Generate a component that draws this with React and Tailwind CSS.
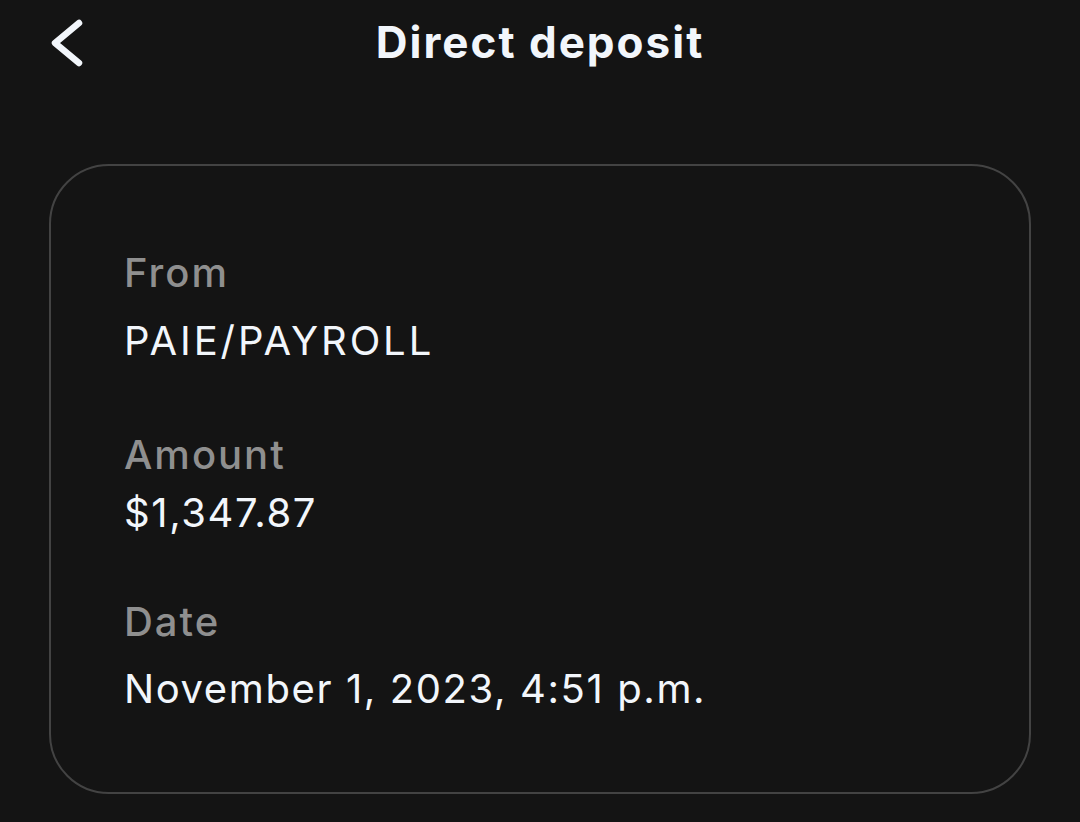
export default function App() {
  return (
    <div className="w-[1080px] h-[822px] bg-[#141414] overflow-hidden" style={{ fontFamily: "Inter, 'Noto Sans', sans-serif" }}>
      <div className="relative h-[84px] flex items-center justify-center">
        <svg className="absolute left-[44px] top-[16px]" width="44" height="54" viewBox="0 0 44 54" fill="none">
          <path d="M35 7 L11 27 L35 47" stroke="#f2f6fb" strokeWidth="6.5" strokeLinecap="round" strokeLinejoin="round" />
        </svg>
        <h1 className="text-[44px] font-bold text-[#f2f6fb] tracking-[2px] leading-none">Direct deposit</h1>
      </div>
      <div className="mx-[49px] mt-[80px] h-[630px] border-2 border-[#434343] rounded-[60px] pl-[73px] pt-[83px] text-[40px] leading-[48px] tracking-[1.6px]">
        <div className="text-[#8f8f8f] font-medium tracking-[2px]">From</div>
        <div className="mt-[20px] text-[#f2f6fb] tracking-[2.9px]">PAIE/PAYROLL</div>
        <div className="mt-[66px] text-[#8f8f8f] font-medium tracking-[2px]">Amount</div>
        <div className="mt-[10px] text-[#f2f6fb]">$1,347.87</div>
        <div className="mt-[61px] text-[#8f8f8f] font-medium tracking-[2px]">Date</div>
        <div className="mt-[19px] text-[#f2f6fb]">November 1, 2023, 4:51 p.m.</div>
      </div>
    </div>
  );
}
